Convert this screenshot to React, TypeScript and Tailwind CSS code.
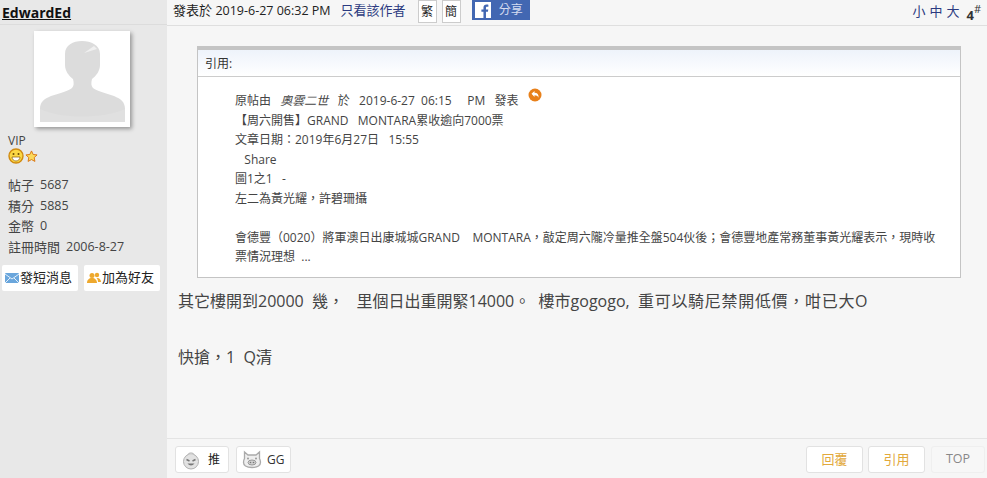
const FONT = "font-['Open_Sans','Noto_Sans_CJK_TC',sans-serif]";

const stats = [
  ["帖子", "5687"],
  ["積分", "5885"],
  ["金幣", "0"],
  ["註冊時間", "2006-8-27"],
];

function Avatar() {
  return (
    <div className="mt-[6px] ml-[34px] h-[96px] w-[96px] bg-white shadow-[2px_2px_4px_rgba(0,0,0,0.35)]">
      <svg viewBox="0 0 96 96" className="h-full w-full">
        <path
          d="M6 91V78c0-7 4-10 11-13 9-3 18-5 21-8 2-2 2-5 1-9-4-3-8-8-8-14V23c0-9 8-13 17-13s18 4 18 13v11c0 6-4 11-8 14-1 4-1 7 1 9 3 3 13 5 21 8 7 3 11 6 11 13v13z"
          fill="#dcdcdc"
        />
        <path d="M6 78c20 10 64 10 85 0v13H6z" fill="#e0e0e0" />
        <path d="M50 22l10-7 3 3z" fill="#f0f0f0" />
      </svg>
    </div>
  );
}

function Smiley() {
  return (
    <svg viewBox="0 0 16 16" className="h-4 w-4">
      <circle cx="8" cy="8" r="7" fill="#fbd743" stroke="#d08a10" strokeWidth="1.400" />
      <circle cx="5.500" cy="6" r="1" fill="#6b4a00" />
      <circle cx="10.500" cy="6" r="1" fill="#6b4a00" />
      <path d="M4 9h8c0 2.500-2 4-4 4s-4-1.500-4-4z" fill="#fff" stroke="#8a5a00" strokeWidth="0.700" />
    </svg>
  );
}

function Star() {
  return (
    <svg viewBox="0 0 14 14" className="h-[13px] w-[13px]">
      <path
        d="M7 1l1.800 3.800 4.200.5-3.100 2.900.8 4.100L7 10.300l-3.700 2 .8-4.100L1 5.300l4.200-.5z"
        fill="#fbd95a"
        stroke="#d9730d"
      />
    </svg>
  );
}

function Sidebar() {
  return (
    <aside className="flex w-[167px] shrink-0 flex-col bg-[#e8e8e8]">
      <div className="h-[25px] border-b border-[#dcdcdc] pl-[2px]">
        <a className="text-[14px] leading-[24px] font-bold text-[#111] underline">EdwardEd</a>
      </div>
      <Avatar />
      <div className="mt-[7px] pl-2 text-[12px] leading-[14px] text-[#444]">VIP</div>
      <div className="flex items-center gap-[1px] pl-2">
        <Smiley />
        <Star />
      </div>
      <div className="mt-[11px] flex flex-col pl-2 text-[13px] leading-[20.700px] text-[#444]">
        {stats.map(([k, v]) => (
          <div key={k} className="flex gap-[6px]">
            <span>{k}</span>
            <span className="text-[12.500px]">{v}</span>
          </div>
        ))}
      </div>
      <div className="mt-[7px] flex gap-[6px] pl-[2px]">
        <button className="flex h-[26px] w-[76px] items-center gap-[1px] rounded-[2px] bg-white pl-[3px] text-[13px] text-[#222]">
          <svg viewBox="0 0 14 10" className="h-[10px] w-[14px]">
            <rect width="14" height="10" rx="1" fill="#6aa6dc" />
            <path d="M0 1l7 5 7-5M0 10l5-5M14 10L9 5" fill="none" stroke="#e4f0fa" strokeWidth="1" />
          </svg>
          發短消息
        </button>
        <button className="flex h-[26px] w-[76px] items-center gap-[1px] rounded-[2px] bg-white pl-[3px] text-[13px] text-[#222]">
          <svg viewBox="0 0 14 12" className="h-[12px] w-[14px]">
            <circle cx="5" cy="3.500" r="2.500" fill="#eea92e" />
            <circle cx="10" cy="3" r="2.200" fill="#eea92e" />
            <path d="M0 11c0-3 2-5 5-5s5 2 5 5zM10.500 6c2 0 3.500 2 3.500 4h-3c0-1.500-.5-3-1.500-4z" fill="#eea92e" />
          </svg>
          加為好友
        </button>
      </div>
    </aside>
  );
}

function TopBar() {
  return (
    <div className="flex h-[26px] shrink-0 items-start border-b border-[#dfdfdf] bg-[#f6f6f6]">
      <span className="ml-[6px] text-[13px] leading-[21px] text-[#222]">
        發表於 <span className="text-[12.500px]">2019-6-27 06:32 PM</span>
      </span>
      <a className="ml-[10px] text-[13px] leading-[21px] text-[#2b3a80]">只看該作者</a>
      <span className="ml-[12px] h-[23px] w-[19px] border border-[#ccc] bg-white text-center text-[12px] leading-[21px] text-[#222]">繁</span>
      <span className="ml-[5px] h-[23px] w-[19px] border border-[#ccc] bg-white text-center text-[12px] leading-[21px] text-[#222]">簡</span>
      <div className="ml-[11px] flex h-[20px] w-[58px] items-center bg-[#4267b2] pl-[3px] text-[12px] text-[#d5dcf0]">
        <svg viewBox="0 0 14 14" className="h-[16px] w-[16px] shrink-0">
          <rect width="14" height="14" fill="#fff" />
          <path d="M9.600 14V8.600h1.700l.3-2.100h-2V5.200c0-.6.2-1 1-1h1.100V2.300c-.2 0-.8-.1-1.600-.1-1.600 0-2.700 1-2.700 2.800v1.500H5.600v2.100h1.800V14z" fill="#4267b2" />
        </svg>
        <span className="ml-[8px]">分享</span>
      </div>
      <div className="ml-auto flex items-start pr-[6px]">
        <span className="text-[13px] leading-[23px] tracking-[4px] text-[#2b3a80]">小中大</span>
        <span className="ml-[3px] mt-[5px] text-[13px] leading-[20px] font-bold text-[#333]">4</span>
        <span className="mt-[1px] text-[11px] leading-[16px] text-[#333]">#</span>
      </div>
    </div>
  );
}

const quoteLines = [
  "【周六開售】GRAND\u00a0\u00a0\u00a0MONTARA累收逾向7000票",
  "文章日期：2019年6月27日\u00a0\u00a0\u00a015:55",
  "\u00a0\u00a0\u00a0Share",
  "圖1之1\u00a0\u00a0\u00a0-",
  "左二為黃光耀，許碧珊攝",
  "\u00a0",
  "會德豐（0020）將軍澳日出康城城GRAND\u00a0\u00a0\u00a0\u00a0MONTARA，敲定周六隴冷量推全盤504伙後；會德豐地產常務董事黃光耀表示，現時收票情況理想\u00a0\u00a0...",
];

function Quote() {
  return (
    <div className="mr-[26px] ml-[30px] mt-[20px] border border-t-[4px] border-[#c4c4c4] bg-white">
      <div className="h-[27px] border-b border-[#ccc] bg-gradient-to-b from-[#eef3fb] to-white pl-[7px] text-[12px] leading-[28px] text-[#333]">
        引用:
      </div>
      <div className="pt-[14px] pb-[10px] pl-[37px] pr-[20px] text-[12px] leading-[19.500px] text-[#444]">
        <div className="flex items-start">
          <span>
            原帖由&nbsp;&nbsp;&nbsp;<em>奧雲二世</em>&nbsp;&nbsp;&nbsp;於&nbsp;&nbsp;&nbsp;2019-6-27&nbsp;&nbsp;06:15&nbsp;&nbsp;&nbsp;&nbsp;&nbsp;PM&nbsp;&nbsp;&nbsp;發表
          </span>
          <svg viewBox="0 0 14 14" className="ml-[9px] -mt-[3px] h-[14px] w-[14px]">
            <circle cx="7" cy="7" r="6.500" fill="#e8801a" />
            <path d="M3.500 5.800L6.500 3v1.800c3 0 4.300 1.800 4 5-.8-1.800-2-2.500-4-2.500v1.700z" fill="#fff" />
          </svg>
        </div>
        {quoteLines.map((l, i) => (
          <div key={i}>{l}</div>
        ))}
      </div>
    </div>
  );
}

function BottomBar() {
  return (
    <div className="flex h-[40px] shrink-0 items-start border-t border-[#e4e4e4] bg-[#f6f6f6] pt-[7px] pl-[8px] pr-[2px]">
      <button className="flex h-[27px] w-[54px] items-center gap-[7px] rounded-[3px] border border-[#e2e2e2] bg-white pl-[5px] text-[12px] text-[#222]">
        <svg viewBox="0 0 20 20" className="h-[20px] w-[20px]">
          <circle cx="10" cy="11.500" r="7.500" fill="#e2e2e2" stroke="#b0b0b0" strokeWidth="1" />
          <path d="M7 4.500C7.500 2.500 12.500 2.500 13 4.500" fill="#e8e8e8" stroke="#b0b0b0" strokeWidth="1" />
          <path d="M5.500 9.500l3 1.500M14.500 9.500l-3 1.500" stroke="#777" strokeWidth="1.400" />
          <path d="M6.500 13.500c2 2.500 5 2.500 7 0z" fill="#777" />
        </svg>
        推
      </button>
      <button className="ml-[7px] flex h-[27px] w-[55px] items-center gap-[5px] rounded-[3px] border border-[#e2e2e2] bg-white pl-[5px] text-[12px] text-[#333]">
        <svg viewBox="0 0 20 20" className="h-[20px] w-[20px]">
          <path d="M2.500 2l3.500 3h8l3.500-3v6.500c1.500 3 1 6-1 7.500-3 2-10 2-13 0-2-1.500-2.500-4.500-1-7.500z" fill="#eee" stroke="#aaa" strokeWidth="1.300" />
          <ellipse cx="10" cy="12.500" rx="4" ry="2.500" fill="#d0d0d0" stroke="#999" strokeWidth="1" />
          <circle cx="8.500" cy="12.500" r=".8" fill="#777" />
          <circle cx="11.500" cy="12.500" r=".8" fill="#777" />
          <circle cx="6" cy="8.500" r="1" fill="#999" />
          <circle cx="14" cy="8.500" r="1" fill="#999" />
        </svg>
        GG
      </button>
      <button className="ml-auto h-[27px] w-[57px] rounded-[3px] border border-[#e2e2e2] bg-white text-[13px] text-[#e2a93c]">回覆</button>
      <button className="ml-[5px] h-[27px] w-[57px] rounded-[3px] border border-[#e2e2e2] bg-white text-[13px] text-[#e2a93c]">引用</button>
      <button className="ml-[6px] h-[27px] w-[54px] rounded-[3px] border border-[#efefef] bg-[#f7f7f7] text-[12.500px] text-[#888]">TOP</button>
    </div>
  );
}

export default function App() {
  return (
    <div className={`flex h-[478px] w-[987px] overflow-hidden bg-[#f6f6f6] ${FONT}`}>
      <Sidebar />
      <main className="flex min-w-0 flex-1 flex-col">
        <TopBar />
        <div className="flex-1">
          <Quote />
          <div className="mt-[13px] ml-[11px] text-[16px] leading-[20px] text-[#444]">
            其它樓開到20000&nbsp;&nbsp;幾，&nbsp;&nbsp;&nbsp;里個日出重開緊14000。&nbsp;&nbsp;樓市gogogo,&nbsp;&nbsp;<span className="tracking-[0.700px]">重可以騎尼禁開低價，咁已大O</span>
          </div>
          <div className="mt-[36px] ml-[11px] text-[16px] leading-[20px] text-[#444]">快搶，1&nbsp;&nbsp;Q清</div>
        </div>
        <BottomBar />
      </main>
    </div>
  );
}
